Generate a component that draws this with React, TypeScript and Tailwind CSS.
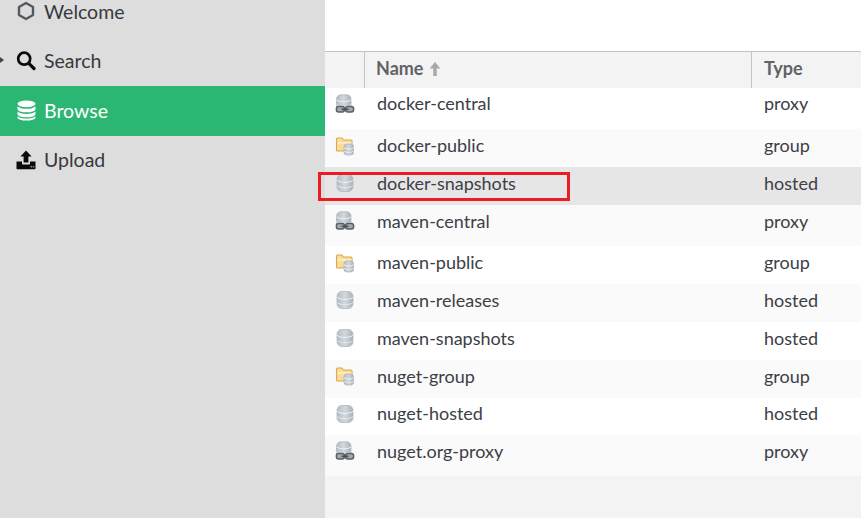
import { useId } from 'react';

type Kind = 'proxy' | 'group' | 'hosted';

const rows: { name: string; type: Kind; h: string; bg: string }[] = [
  { name: 'docker-central', type: 'proxy', h: 'h-[41px] pb-[10px]', bg: 'bg-white' },
  { name: 'docker-public', type: 'group', h: 'h-[38px] pb-[5px]', bg: 'bg-[#fafafa]' },
  { name: 'docker-snapshots', type: 'hosted', h: 'h-[38px] pb-[6px]', bg: 'bg-[#e6e6e6]' },
  { name: 'maven-central', type: 'proxy', h: 'h-[41px] pb-[9px]', bg: 'bg-[#fafafa]' },
  { name: 'maven-public', type: 'group', h: 'h-[38px] pb-[5px]', bg: 'bg-white' },
  { name: 'maven-releases', type: 'hosted', h: 'h-[38px] pb-[6px]', bg: 'bg-[#fafafa]' },
  { name: 'maven-snapshots', type: 'hosted', h: 'h-[38px] pb-[6px]', bg: 'bg-white' },
  { name: 'nuget-group', type: 'group', h: 'h-[38px] pb-[6px]', bg: 'bg-[#fafafa]' },
  { name: 'nuget-hosted', type: 'hosted', h: 'h-[37px] pb-[6px]', bg: 'bg-white' },
  { name: 'nuget.org-proxy', type: 'proxy', h: 'h-[41px] pb-[9px]', bg: 'bg-[#fafafa]' },
];

function Cylinder({ x, y, w, h, id }: { x: number; y: number; w: number; h: number; id: string }) {
  return (
    <g>
      <rect x={x} y={y} width={w} height={h} rx={w / 3.4} fill={`url(#${id})`} stroke="#a9b2ba" strokeWidth="0.7" />
      <path d={`M${x} ${y + h * 0.34}c${w * 0.2} ${h * 0.17} ${w * 0.8} ${h * 0.17} ${w} 0`} fill="none" stroke="#f2f4f6" strokeWidth="1" />
      <path d={`M${x} ${y + h * 0.65}c${w * 0.2} ${h * 0.17} ${w * 0.8} ${h * 0.17} ${w} 0`} fill="none" stroke="#eef0f2" strokeWidth="0.8" />
    </g>
  );
}

function RepoIcon({ type }: { type: Kind }) {
  const id = useId().replace(/:/g, '');
  return (
    <svg width="20" height="20" viewBox="0 0 20 20" className="block">
      <defs>
        <linearGradient id={id} x1="0" y1="0" x2="1" y2="0">
          <stop offset="0" stopColor="#b4bcc4" />
          <stop offset="0.5" stopColor="#d3d8dd" />
          <stop offset="1" stopColor="#a8b1ba" />
        </linearGradient>
      </defs>
      {type === 'hosted' && <Cylinder x={2} y={1.5} w={16} h={17} id={id} />}
      {type === 'proxy' && (
        <>
          <Cylinder x={1.5} y={0.8} w={14.5} h={15} id={id} />
          <rect x={1.4} y={12.6} width={8} height={5.4} rx={2.2} fill="#a4a8ac" stroke="#5b6064" strokeWidth="1.5" />
          <rect x={10.6} y={12.6} width={8} height={5.4} rx={2.2} fill="#a4a8ac" stroke="#5b6064" strokeWidth="1.5" />
          <path d="M6.5 15.3h7" stroke="#4c5155" strokeWidth="1.6" />
        </>
      )}
      {type === 'group' && (
        <>
          <path d="M1.5 3c0-.6.4-1 1-1h4.5l1.5 2H16c.6 0 1 .4 1 1v10H2.5c-.6 0-1-.4-1-1z" fill="#f8dd9a" stroke="#dca849" strokeWidth="1.1" />
          <path d="M2.5 7h14" stroke="#fcefc8" strokeWidth="1.6" />
          <Cylinder x={9} y={8} w={9.5} h={11} id={id} />
        </>
      )}
    </svg>
  );
}

function NavItem({ label, active, children }: { label: string; active?: boolean; children: React.ReactNode }) {
  return (
    <div className={`relative flex h-[49.5px] items-center pl-4 pb-[1px] text-[19.5px] ${active ? 'bg-[#2bb673] text-white' : 'text-[#35393f]'}`}>
      <span className="flex w-[20px] justify-center">{children}</span>
      <span className="ml-[8px]">{label}</span>
    </div>
  );
}

export default function App() {
  return (
    <div className="relative flex h-[518px] w-[861px] overflow-hidden font-['Lato','Liberation_Sans',sans-serif]">
      {/* Sidebar */}
      <aside className="relative w-[325px] shrink-0 bg-[#dddddd]">
        <div className="-mt-[13px]">
          <NavItem label="Welcome">
            <svg width="18" height="20" viewBox="0 0 18 20">
              <path d="M9 2 16 6v8l-7 4-7-4V6z" fill="none" stroke="#55595d" strokeWidth="2.4" strokeLinejoin="round" />
            </svg>
          </NavItem>
          <NavItem label="Search">
            <svg width="21" height="21" viewBox="0 0 20 20">
              <circle cx="8.2" cy="8.2" r="6" fill="none" stroke="#0b0b0b" strokeWidth="2.7" />
              <path d="m12.8 12.8 5.2 5.2" stroke="#0b0b0b" strokeWidth="3.2" strokeLinecap="round" />
            </svg>
          </NavItem>
          <NavItem label="Browse" active>
            <svg width="19" height="21" viewBox="0 0 19 21">
              <ellipse cx="9.5" cy="3.8" rx="9" ry="3.4" fill="#fff" />
              <path d="M.5 6.2v2.7c0 1.9 4 3.4 9 3.4s9-1.5 9-3.4V6.2c-1.4 1.7-5 2.6-9 2.6s-7.6-.9-9-2.6z" fill="#fff" />
              <path d="M.5 11.5v2.4c0 1.9 4 3.4 9 3.4s9-1.5 9-3.4v-2.4c-1.4 1.7-5 2.4-9 2.4s-7.6-.7-9-2.4z" fill="#fff" />
              <path d="M.5 16.2v1.2c0 1.9 4 3.1 9 3.1s9-1.2 9-3.1v-1.2c-1.4 1.6-5 2.4-9 2.4s-7.6-.8-9-2.4z" fill="#fff" />
            </svg>
          </NavItem>
          <NavItem label="Upload">
            <svg width="20" height="20" viewBox="0 0 20 20">
              <path d="M10 0.5 15.6 6.6H12.4V12.6H7.6V6.6H4.4z" fill="#0b0b0b" />
              <path d="M0.5 11.5H6V13.6c0 .6.4 1 1 1h6c.6 0 1-.4 1-1v-2.1h5.5v6.8c0 .6-.4 1-1 1h-17c-.6 0-1-.4-1-1z" fill="#0b0b0b" />
              <path d="M14.5 16.8h1.4M16.8 16.8h1.4" stroke="#dddddd" strokeWidth="1" />
            </svg>
          </NavItem>
        </div>
        <span className="absolute left-0 top-[57px] h-0 w-0 border-y-[3.5px] border-l-[4px] border-y-transparent border-l-[#444]" />
      </aside>

      {/* Repository table */}
      <main className="flex min-w-0 flex-1 flex-col bg-[#f3f3f3]">
        <div className="h-[51px] shrink-0 border-b border-[#c4c4c4] bg-white box-content" />
        <div className="flex h-[36px] shrink-0 items-center text-[18px] font-bold text-[#5f6368]">
          <div className="h-full w-[40px] border-r border-[#c4c4c4]" />
          <div className="flex h-full w-[387px] items-center border-r border-[#c4c4c4] pb-[4px] pl-[11px]">
            <span>Name</span>
            <svg width="14" height="16" viewBox="0 0 12 15" className="ml-[5px] mt-[2px]">
              <path d="M6 1 11 7H7.6V14H4.4V7H1z" fill="#a6a8aa" />
            </svg>
          </div>
          <div className="pb-[4px] pl-[12px]">Type</div>
        </div>
        {rows.map(r => (
          <div key={r.name} className={`flex shrink-0 items-center text-[18px] text-[#3c4046] ${r.h} ${r.bg}`}>
            <div className="flex w-[40px] justify-center pr-[1px]">
              <RepoIcon type={r.type} />
            </div>
            <div className="w-[387px] pl-[12px]">{r.name}</div>
            <div className="pl-[12px]">{r.type}</div>
          </div>
        ))}
      </main>

      {/* Red annotation */}
      <div className="absolute left-[318px] top-[172px] h-[29px] w-[252px] border-[3px] border-[#ed1c24]" />
    </div>
  );
}
